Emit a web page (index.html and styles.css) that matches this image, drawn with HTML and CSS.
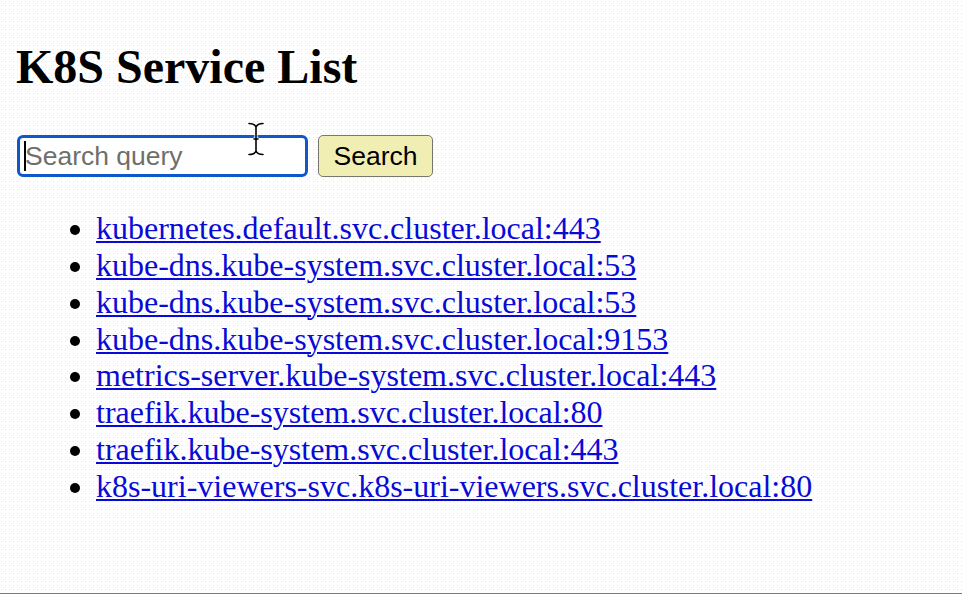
FILE: index.html
```html
<!DOCTYPE html>
<html lang="en">
<head>
<meta charset="utf-8">
<title>K8S Service List</title>
<link rel="stylesheet" href="styles.css">
</head>
<body>
<h2 class="title">K8S Service List</h2>
<form class="search">
  <input class="search-input" type="text" placeholder="Search query">
  <button class="search-btn" type="button">Search</button>
</form>
<ul class="services">
  <li><a href="#">kubernetes.default.svc.cluster.local:443</a></li>
  <li><a href="#">kube-dns.kube-system.svc.cluster.local:53</a></li>
  <li><a href="#">kube-dns.kube-system.svc.cluster.local:53</a></li>
  <li><a href="#">kube-dns.kube-system.svc.cluster.local:9153</a></li>
  <li><a href="#">metrics-server.kube-system.svc.cluster.local:443</a></li>
  <li><a href="#">traefik.kube-system.svc.cluster.local:80</a></li>
  <li><a href="#">traefik.kube-system.svc.cluster.local:443</a></li>
  <li><a href="#">k8s-uri-viewers-svc.k8s-uri-viewers.svc.cluster.local:80</a></li>
</ul>
<span class="text-caret"></span>
<svg class="ibeam" width="16" height="34" viewBox="0 0 16 34" aria-hidden="true">
  <path d="M1 1.5 C4 1.5 7 2.5 8 5 C9 2.5 12 1.5 15 1.5 M8 5 V29 M1 32.5 C4 32.5 7 31.5 8 29 C9 31.5 12 32.5 15 32.5 M6 17 H10" fill="none" stroke="#fff" stroke-width="3.2" stroke-linecap="round"/>
  <path d="M1 1.5 C4 1.5 7 2.5 8 5 C9 2.5 12 1.5 15 1.5 M8 5 V29 M1 32.5 C4 32.5 7 31.5 8 29 C9 31.5 12 32.5 15 32.5 M6 17 H10" fill="none" stroke="#000" stroke-width="1.6" stroke-linecap="round"/>
</svg>
</body>
</html>
```
FILE: styles.css
```css
html {
  height: 100%;
  box-sizing: border-box;
  background-color: #ffffff;
  background-image:
    radial-gradient(circle at 1.5px 1.5px, #f5f19a 0.55px, transparent 0.75px),
    radial-gradient(circle at 3.5px 3.5px, #e2e0f0 0.55px, transparent 0.75px);
  background-size: 4px 4px, 8px 8px;
  border-bottom: 1px solid #7d7d72;
}

body {
  margin: 16px;
  font-family: "Liberation Serif", "Times New Roman", serif;
  position: relative;
}

.title {
  font-size: 48px;
  font-weight: bold;
  margin: 23px 0 41px;
  line-height: 1.15;
  color: #000;
}

.search {
  display: flex;
  align-items: center;
  gap: 10px;
  margin: 0;
  padding-left: 1px;
}

.search-input {
  box-sizing: border-box;
  width: 291px;
  height: 42px;
  border: 3.5px solid #0e58c9;
  border-radius: 6px;
  padding: 0 5px;
  font-family: "Liberation Sans", Arial, sans-serif;
  font-size: 26.5px;
  background: #ffffff;
  outline: none;
  color: #000;
}

.search-input::placeholder {
  color: #6f6f6a;
}

.search-btn {
  box-sizing: border-box;
  width: 115px;
  height: 42px;
  border: 1.5px solid #77776f;
  border-radius: 5px;
  background: #f1eeb4;
  font-family: "Liberation Sans", Arial, sans-serif;
  font-size: 26.5px;
  color: #000;
  padding: 0;
}

.services {
  margin: 33px 0 32px;
  padding-left: 80px;
  font-size: 32px;
  line-height: 1.15;
}

.services a {
  color: #0a0ad6;
  text-decoration-thickness: 2px;
  text-underline-offset: 2px;
}

.text-caret {
  position: absolute;
  left: 8px;
  top: 125px;
  width: 2px;
  height: 30px;
  background: #000;
}

.ibeam {
  position: absolute;
  left: 232px;
  top: 106px;
}
```
